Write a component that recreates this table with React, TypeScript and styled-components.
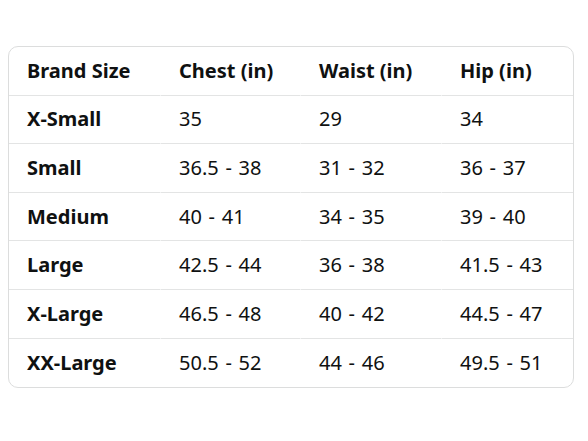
import React from "react";
import styled, { createGlobalStyle } from "styled-components";

const Global = createGlobalStyle`
  html, body { margin: 0; padding: 0; background: #ffffff; }
  body { font-family: "Noto Sans", "Open Sans", Arial, sans-serif; color: #0f1111; }
`;

const Page = styled.div`
  padding: 46px 14px 0 8px;
`;

const Card = styled.div`
  border: 1px solid #dcdddd;
  border-radius: 10px;
  overflow: hidden;
`;

const Table = styled.table`
  width: 100%;
  border-collapse: separate;
  border-spacing: 0;
  table-layout: fixed;
`;

const Cell = styled.td<{ $head?: boolean; $bold?: boolean; $last?: boolean }>`
  height: 48.6px;
  padding: 0 0 0 18px;
  box-sizing: border-box;
  font-size: 20px;
  line-height: 26px;
  font-weight: ${(p) => (p.$bold || p.$head ? 700 : 400)};
  word-spacing: ${(p) => (p.$bold || p.$head ? "0" : "1.5px")};
  text-align: left;
  vertical-align: middle;
  white-space: nowrap;
  border-bottom: ${(p) => (p.$last ? "none" : "1px solid #e3e4e4")};
  border-right: 1px solid #ffffff;
  &:last-child { border-right: none; }
`;

const rows = [
  ["X-Small", "35", "29", "34"],
  ["Small", "36.5 - 38", "31 - 32", "36 - 37"],
  ["Medium", "40 - 41", "34 - 35", "39 - 40"],
  ["Large", "42.5 - 44", "36 - 38", "41.5 - 43"],
  ["X-Large", "46.5 - 48", "40 - 42", "44.5 - 47"],
  ["XX-Large", "50.5 - 52", "44 - 46", "49.5 - 51"],
];

const head = ["Brand Size", "Chest (in)", "Waist (in)", "Hip (in)"];
const widths = [152, 140, 141, 132];

export default function App() {
  return (
    <Page>
      <Global />
      <Card>
        <Table>
          <colgroup>
            {widths.map((w, i) => (
              <col key={i} style={{ width: w }} />
            ))}
          </colgroup>
          <thead>
            <tr>
              {head.map((h) => (
                <Cell as="th" key={h} $head>
                  {h}
                </Cell>
              ))}
            </tr>
          </thead>
          <tbody>
            {rows.map((r, ri) => (
              <tr key={r[0]}>
                {r.map((c, ci) => (
                  <Cell key={ci} $bold={ci === 0} $last={ri === rows.length - 1}>
                    {c}
                  </Cell>
                ))}
              </tr>
            ))}
          </tbody>
        </Table>
      </Card>
    </Page>
  );
}
